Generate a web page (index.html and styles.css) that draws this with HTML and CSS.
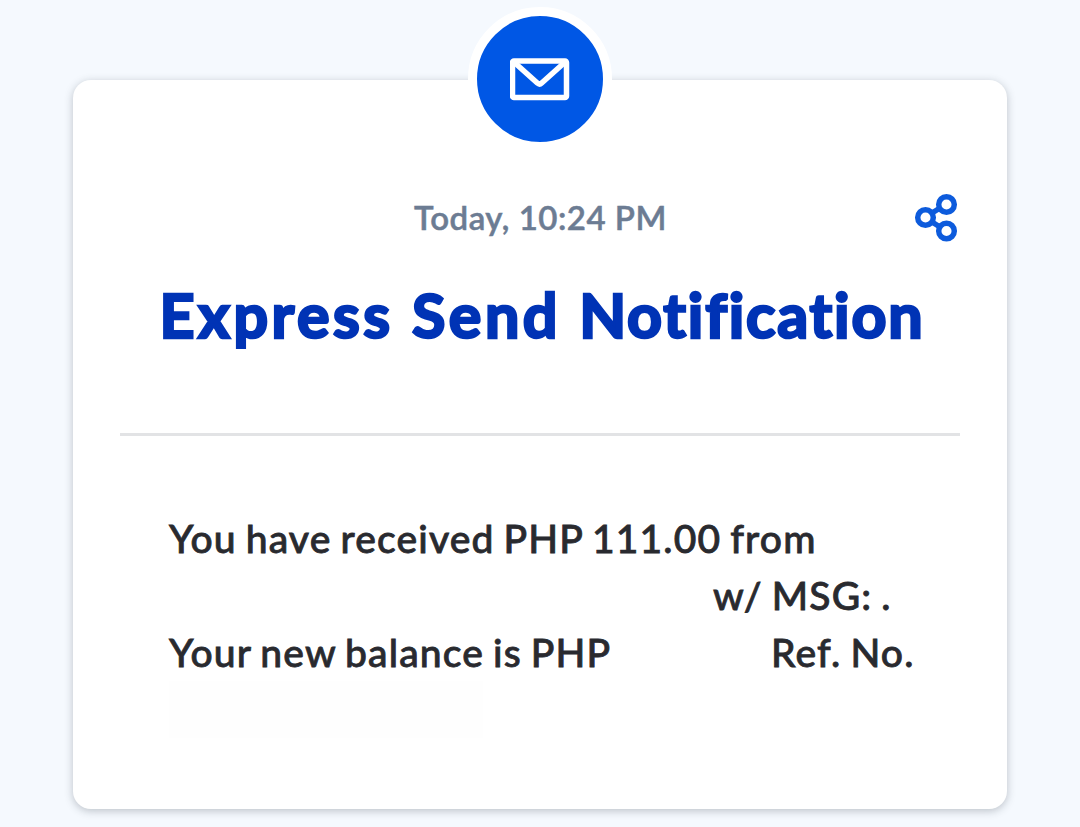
FILE: index.html
```html
<!DOCTYPE html>
<html lang="en">
<head>
    <meta charset="UTF-8">
    <title>Express Send Notification</title>
    <link rel="stylesheet" href="styles.css">
</head>
<body>
    <div class="card">
        <div class="badge">
            <svg width="60" height="44" viewBox="0 0 60 44" fill="none" stroke="#fff" stroke-width="5.500" stroke-linejoin="round">
                <rect x="2.500" y="3" width="54" height="36.500" rx="1.500"/>
                <path d="M5 5L27.300 25Q29.500 27 31.700 25L54 5"/>
            </svg>
        </div>
        <div class="top-row">
            <span class="time">Today, 10:24 PM</span>
            <button class="share" type="button" aria-label="Share">
                <svg width="44" height="50" viewBox="0 0 44 50" fill="none" stroke="#0d5bdc" stroke-width="5.500">
                    <circle cx="9.500" cy="24.500" r="7.800"/>
                    <circle cx="30.500" cy="11.500" r="7.800"/>
                    <circle cx="30.500" cy="38" r="7.800"/>
                    <path d="M16 20L24 15M16 29L24 34"/>
                </svg>
            </button>
        </div>
        <h1>Express Send <span>Notification</span></h1>
        <hr>
        <div class="message">
            <p>You have received PHP 111.00 from</p>
            <p><span class="hidden-name"></span>w/ MSG: .</p>
            <p><span class="balance">Your new balance is PHP</span>Ref. No.</p>
            <p><span class="hidden-ref"></span></p>
        </div>
    </div>
</body>
</html>
```
FILE: styles.css
```css
body {
    font-family: Lato, sans-serif;
    margin: 0;
    padding: 80px 73px 18px;
    background-color: #f5f9fe;
    overflow: hidden;
}

.card {
    box-sizing: border-box;
    height: 729px;
    padding: 0 47px;
    background-color: #fff;
    border-radius: 18px;
    box-shadow: 0 2px 9px rgba(40, 50, 60, 0.28);
    display: flex;
    flex-direction: column;
}

.badge {
    width: 126px;
    height: 126px;
    margin: -73px auto 0;
    border: 9px solid #fff;
    border-radius: 50%;
    background-color: #0057e5;
    display: flex;
    align-items: center;
    justify-content: center;
    flex-shrink: 0;
}

.badge svg {
    margin-top: 2px;
}

.top-row {
    display: grid;
    grid-template-columns: 44px 1fr 44px;
    align-items: center;
    height: 50px;
    margin-top: 42px;
}

.time {
    grid-column: 2;
    padding: 0 0 2px 1px;
    text-align: center;
    font-size: 33px;
    font-weight: 600;
    letter-spacing: 0.5px;
    -webkit-text-stroke: 0.5px #6c7c93;
    color: #6c7c93;
}

.share {
    padding: 0;
    border: none;
    background: none;
    height: 50px;
    cursor: pointer;
}

.share svg {
    overflow: visible;
}

h1 {
    margin: 34px 0 0;
    padding-left: 4px;
    text-align: center;
    white-space: nowrap;
    font-size: 61px;
    line-height: 76px;
    font-weight: 700;
    letter-spacing: 3.5px;
    -webkit-text-stroke: 2.6px #0033b5;
    color: #0033b5;
}

h1 span {
    letter-spacing: 1.8px;
}

hr {
    width: 100%;
    height: 3px;
    margin: 80px 0 0;
    border: none;
    background-color: #e2e3e5;
    flex-shrink: 0;
}

.message {
    padding: 74px 0 0 49px;
    font-size: 39px;
    line-height: 57px;
    font-weight: 500;
    letter-spacing: 1.15px;
    word-spacing: -2px;
    -webkit-text-stroke: 0.8px #292a2f;
    color: #292a2f;
}

.message p {
    display: flex;
    height: 57px;
    margin: 0;
    white-space: nowrap;
}

.hidden-name {
    width: 544px;
}

.balance {
    width: 602px;
}

.hidden-ref {
    width: 314px;
    background-color: #fefefe;
}
```
